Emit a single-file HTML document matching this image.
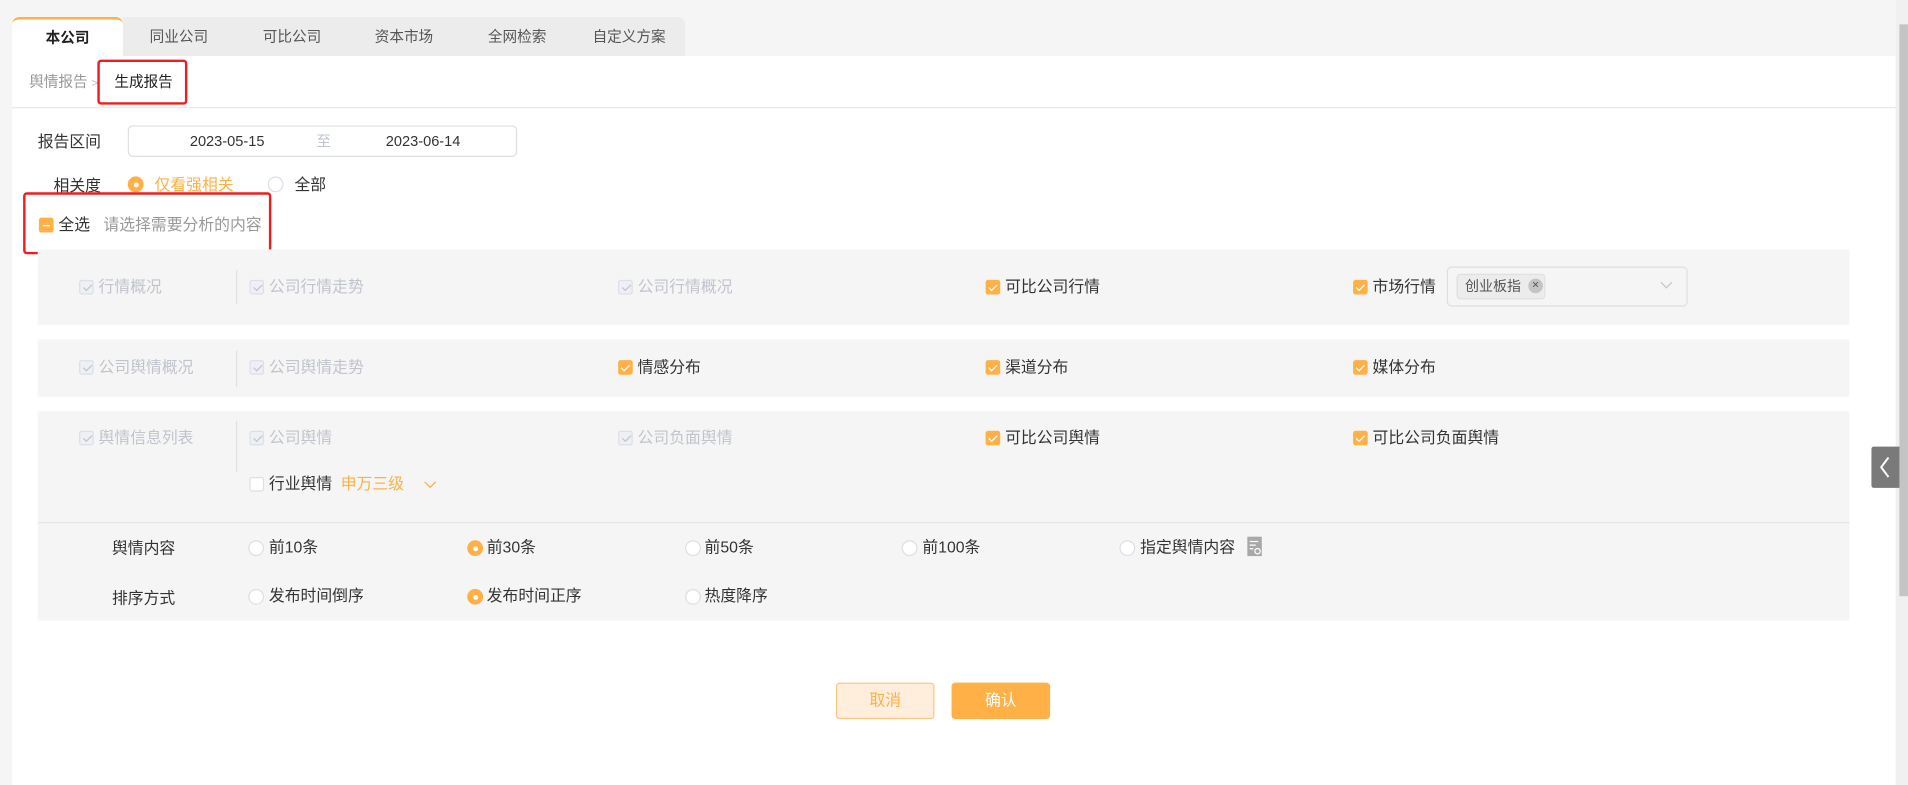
<!DOCTYPE html>
<html><head><meta charset="utf-8"><style>
*{margin:0;padding:0;box-sizing:border-box}
html,body{width:1908px;height:785px;overflow:hidden;background:#f5f5f5}
#s{position:absolute;left:0;top:0;width:1568px;height:645px;transform:scale(1.2168);transform-origin:0 0;font-family:"Liberation Sans","Noto Sans CJK SC",sans-serif;font-size:13px;color:#333}
.a{position:absolute;white-space:nowrap;line-height:16px}
.tab{position:absolute;top:14px;height:32px;width:92px;text-align:center;line-height:33px;font-size:12px;color:#555}
.sec{position:absolute;left:31px;width:1489px;background:#f5f5f5}
.cb{position:absolute;width:12px;height:12px;border-radius:2px}
.on{background:#ffb046}
.on:after{content:"";position:absolute;left:4px;top:1.5px;width:3px;height:6px;border:solid #fff;border-width:0 1.2px 1.2px 0;transform:rotate(45deg)}
.dis{background:#eef0f5;border:1px solid #dcdfe6}
.dis:after{content:"";position:absolute;left:3.5px;top:1px;width:3px;height:6px;border:solid #c0c4cc;border-width:0 1px 1px 0;transform:rotate(45deg)}
.off{background:#fff;border:1px solid #dcdfe6}
.g{color:#c0c4cc}
.r{position:absolute;width:13px;height:13px;border-radius:50%;border:1px solid #dcdfe6;background:#fff}
.r.sel{border:none;background:#ffb046}
.r.sel:after{content:"";position:absolute;left:4.5px;top:4.5px;width:4px;height:4px;border-radius:50%;background:#fff}
.red{position:absolute;border:2px solid #f21c1c;border-radius:3px}
</style></head><body><div id="s">
<div style="position:absolute;left:10px;top:46px;width:1548px;height:599px;background:#fff"></div>
<div style="position:absolute;left:101px;top:14px;width:462px;height:32px;background:#ececec;border-radius:0 6px 0 0"></div>
<div class="tab" style="left:10px;width:91px;background:#fff;border-top:2px solid #ffb046;border-radius:6px 6px 0 0;color:#222;font-weight:bold;line-height:30px">本公司</div>
<div class="tab" style="left:101px">同业公司</div>
<div class="tab" style="left:194px">可比公司</div>
<div class="tab" style="left:286px">资本市场</div>
<div class="tab" style="left:379px">全网检索</div>
<div class="tab" style="left:471px">自定义方案</div>
<div style="position:absolute;left:1558px;top:0;width:10px;height:645px;background:#f0f0f0"></div>
<div style="position:absolute;left:1561px;top:20px;width:7px;height:470px;background:#c4c4c4"></div>

<div class="a" style="left:24px;top:59px;font-size:12px;color:#999">舆情报告 <span style="font-size:9px;color:#bbb">&gt;</span></div>
<div class="a" style="left:94px;top:59px;font-size:12px;color:#222">生成报告</div>
<div class="red" style="left:80px;top:49px;width:74px;height:37px"></div>
<div style="position:absolute;left:10px;top:88px;width:1548px;height:1px;background:#e8e8e8"></div>

<div class="a" style="left:31px;top:109px">报告区间</div>
<div style="position:absolute;left:105px;top:103px;width:320px;height:26px;border:1px solid #dcdfe6;border-radius:4px"></div>
<div class="a" style="left:156px;top:108px;font-size:12px">2023-05-15</div>
<div class="a" style="left:260px;top:108px;font-size:12px;color:#c0c4cc">至</div>
<div class="a" style="left:317px;top:108px;font-size:12px">2023-06-14</div>

<div class="a" style="left:44px;top:145px">相关度</div>
<div class="r sel" style="left:105px;top:145px"></div>
<div class="a" style="left:127px;top:144px;color:#ffb046">仅看强相关</div>
<div class="r" style="left:220px;top:145px"></div>
<div class="a" style="left:242px;top:144px">全部</div>

<div class="red" style="left:19px;top:158px;width:204px;height:51px"></div>
<div class="cb on" style="left:32px;top:179px"></div>
<div style="position:absolute;left:35px;top:184.5px;width:6px;height:1.2px;background:#fff"></div>
<div class="cb" style="left:32px;top:179px;background:#ffb046"><div style="position:absolute;left:3px;top:5.5px;width:6px;height:1.3px;background:#fff"></div></div>
<div class="a" style="left:48px;top:177px">全选</div>
<div class="a" style="left:85px;top:177px;color:#999">请选择需要分析的内容</div>

<div class="sec" style="top:205px;height:62px"></div>
<div style="position:absolute;left:194px;top:222px;width:1px;height:28px;background:#e0e0e0"></div>
<div class="cb dis" style="left:65px;top:230px"></div><div class="a g" style="left:81px;top:228px">行情概况</div>
<div class="cb dis" style="left:205px;top:230px"></div><div class="a g" style="left:221px;top:228px">公司行情走势</div>
<div class="cb dis" style="left:508px;top:230px"></div><div class="a g" style="left:524px;top:228px">公司行情概况</div>
<div class="cb on" style="left:810px;top:230px"></div><div class="a" style="left:826px;top:228px">可比公司行情</div>
<div class="cb on" style="left:1112px;top:230px"></div><div class="a" style="left:1128px;top:228px">市场行情</div>
<div style="position:absolute;left:1189px;top:219px;width:198px;height:33px;border:1px solid #dcdfe6;border-radius:4px;background:#f5f5f5"></div>
<div style="position:absolute;left:1197px;top:225px;width:73px;height:21px;border:1px solid #e0e0e0;border-radius:3px;background:#ececec"></div>
<div class="a" style="left:1204px;top:228px;font-size:11.5px;color:#555">创业板指</div>
<div style="position:absolute;left:1256px;top:229px;width:12px;height:12px;border-radius:50%;background:#c4c4c4;color:#555;font-size:10px;line-height:12px;text-align:center">×</div>
<svg style="position:absolute;left:1364px;top:231px" width="11" height="7"><path d="M1 1l4.5 4.5L10 1" fill="none" stroke="#c0c4cc" stroke-width="1"/></svg>

<div class="sec" style="top:279px;height:47px"></div>
<div style="position:absolute;left:194px;top:288px;width:1px;height:30px;background:#e0e0e0"></div>
<div class="cb dis" style="left:65px;top:296px"></div><div class="a g" style="left:81px;top:294px">公司舆情概况</div>
<div class="cb dis" style="left:205px;top:296px"></div><div class="a g" style="left:221px;top:294px">公司舆情走势</div>
<div class="cb on" style="left:508px;top:296px"></div><div class="a" style="left:524px;top:294px">情感分布</div>
<div class="cb on" style="left:810px;top:296px"></div><div class="a" style="left:826px;top:294px">渠道分布</div>
<div class="cb on" style="left:1112px;top:296px"></div><div class="a" style="left:1128px;top:294px">媒体分布</div>

<div class="sec" style="top:338px;height:172px"></div>
<div style="position:absolute;left:194px;top:346px;width:1px;height:42px;background:#e0e0e0"></div>
<div class="cb dis" style="left:65px;top:354px"></div><div class="a g" style="left:81px;top:352px">舆情信息列表</div>
<div class="cb dis" style="left:205px;top:354px"></div><div class="a g" style="left:221px;top:352px">公司舆情</div>
<div class="cb dis" style="left:508px;top:354px"></div><div class="a g" style="left:524px;top:352px">公司负面舆情</div>
<div class="cb on" style="left:810px;top:354px"></div><div class="a" style="left:826px;top:352px">可比公司舆情</div>
<div class="cb on" style="left:1112px;top:354px"></div><div class="a" style="left:1128px;top:352px">可比公司负面舆情</div>
<div class="cb off" style="left:205px;top:392px"></div><div class="a" style="left:221px;top:390px">行业舆情</div>
<div class="a" style="left:280px;top:390px;color:#ffb046">申万三级</div>
<svg style="position:absolute;left:348px;top:395px" width="11" height="7"><path d="M1 1l4.5 4.5L10 1" fill="none" stroke="#ffb046" stroke-width="1"/></svg>
<div style="position:absolute;left:31px;top:429px;width:1489px;height:1px;background:#e6e6e6"></div>

<div class="a" style="left:92px;top:443px">舆情内容</div>
<div class="r" style="left:204px;top:444px"></div><div class="a" style="left:221px;top:442px">前10条</div>
<div class="r sel" style="left:384px;top:444px"></div><div class="a" style="left:400px;top:442px">前30条</div>
<div class="r" style="left:563px;top:444px"></div><div class="a" style="left:579px;top:442px">前50条</div>
<div class="r" style="left:741px;top:444px"></div><div class="a" style="left:758px;top:442px">前100条</div>
<div class="r" style="left:920px;top:444px"></div><div class="a" style="left:937px;top:442px">指定舆情内容</div>
<svg style="position:absolute;left:1025px;top:441px" width="13" height="17"><rect x="0" y="0" width="12" height="16" fill="#a8a8a8"/><path d="M2 4h7M2 7h5M2 10h3" stroke="#fff" stroke-width="1"/><circle cx="8.5" cy="12" r="2.2" fill="none" stroke="#fff" stroke-width="1"/></svg>

<div class="a" style="left:92px;top:484px">排序方式</div>
<div class="r" style="left:204px;top:484px"></div><div class="a" style="left:221px;top:482px">发布时间倒序</div>
<div class="r sel" style="left:384px;top:484px"></div><div class="a" style="left:400px;top:482px">发布时间正序</div>
<div class="r" style="left:563px;top:484px"></div><div class="a" style="left:579px;top:482px">热度降序</div>

<div style="position:absolute;left:687px;top:561px;width:81px;height:30px;border:1px solid #ffc580;border-radius:3px;background:#ffeedb;color:#ffb046;text-align:center;line-height:28px">取消</div>
<div style="position:absolute;left:782px;top:561px;width:81px;height:30px;border-radius:3px;background:#ffb046;color:#fff;text-align:center;line-height:30px">确认</div>

<div style="position:absolute;left:1538px;top:367px;width:23px;height:34px;background:#7a7a7a;border-radius:2px 0 0 2px"></div>
<svg style="position:absolute;left:1543px;top:374px" width="12" height="20"><path d="M9 2L3 10l6 8" fill="none" stroke="#fff" stroke-width="1.6"/></svg>
</div></body></html>
